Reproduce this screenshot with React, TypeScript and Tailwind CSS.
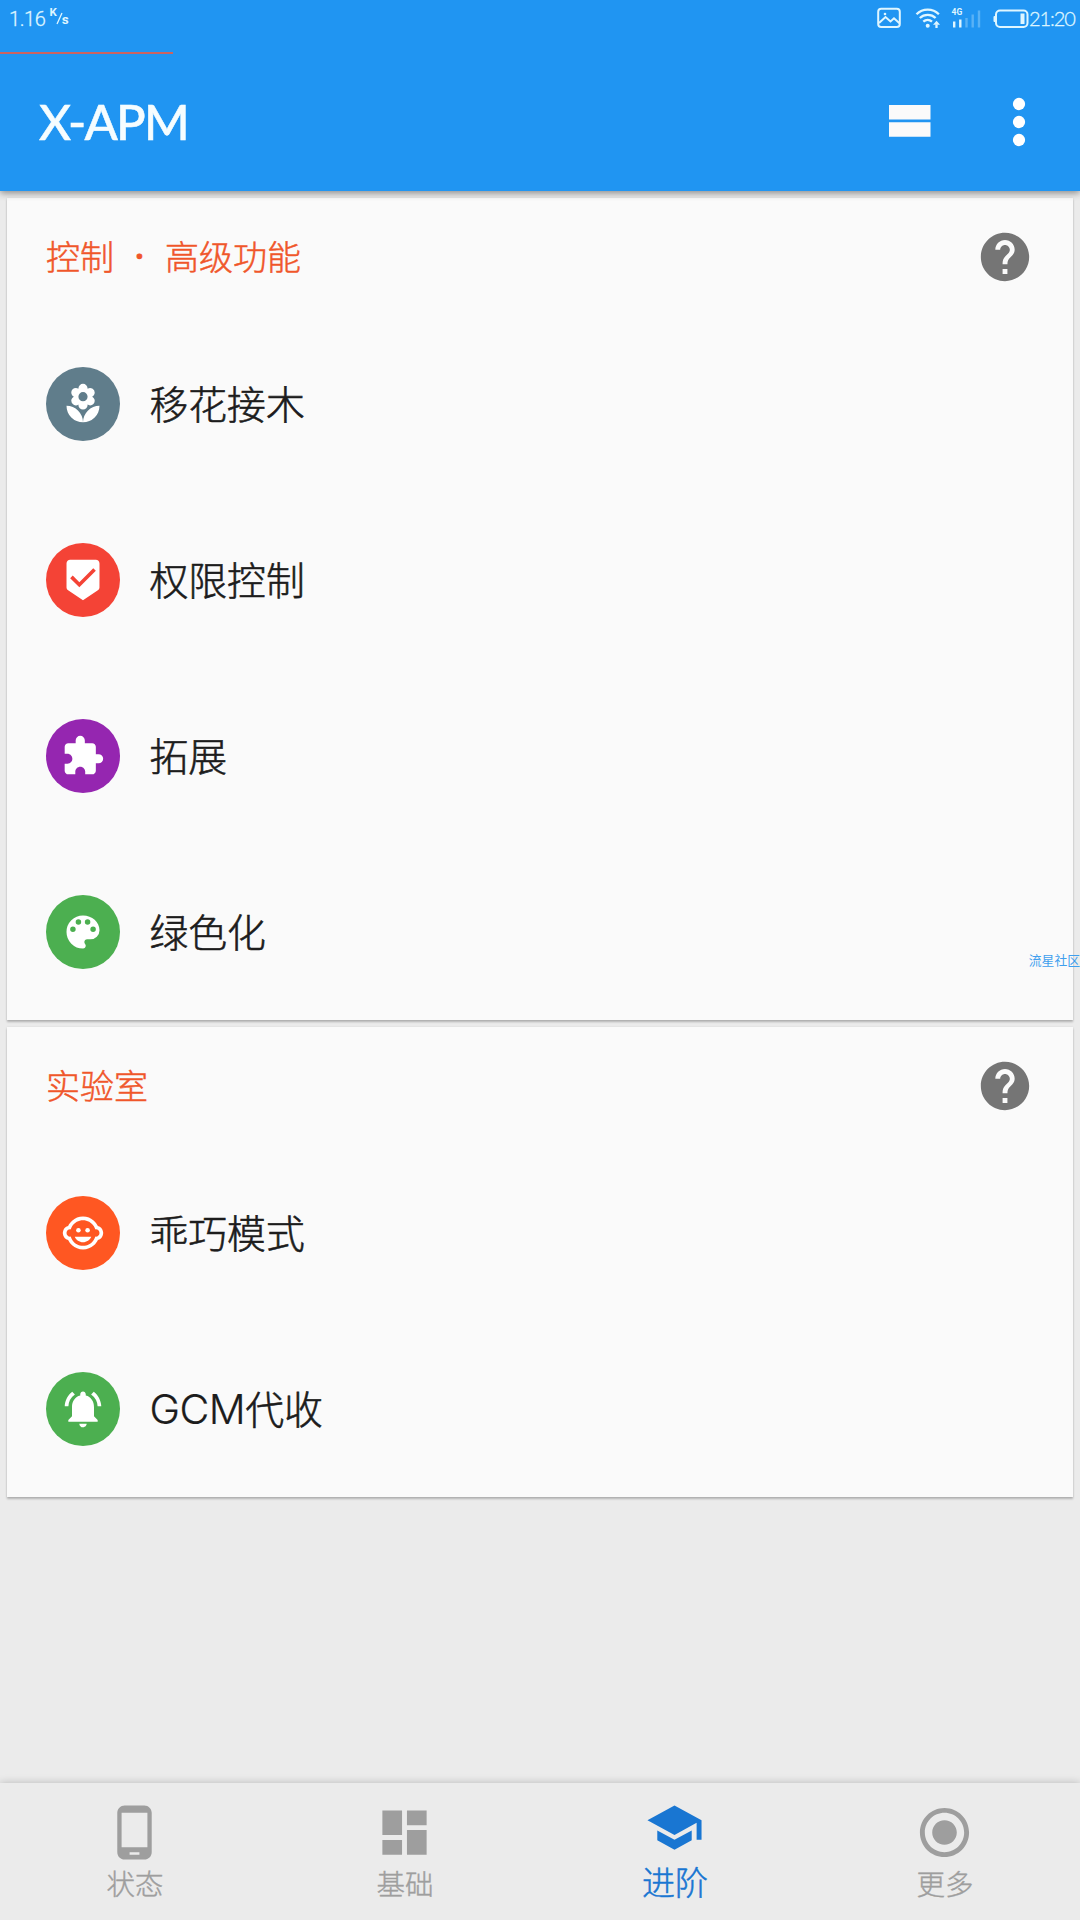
import type { ReactNode } from "react";
import {
  MdBeenhere,
  MdDashboard,
  MdExtension,
  MdHelp,
  MdLocalFlorist,
  MdNotificationsActive,
  MdPhoneAndroid,
  MdRadioButtonChecked,
  MdSchool,
} from "react-icons/md";

const CJK = "font-['Noto_Sans_CJK_SC',sans-serif]";

function PaletteIcon() {
  return (
    <svg viewBox="0 0 24 24" className="size-[44px]" fill="currentColor">
      <path d="M12 3a9 9 0 0 0 0 18c.83 0 1.5-.67 1.5-1.5 0-.39-.15-.74-.39-1.01-.23-.26-.38-.61-.38-.99 0-.83.67-1.5 1.5-1.5H16a5 5 0 0 0 5-5c0-4.42-4.03-8-9-8zm-5.5 9a1.5 1.5 0 1 1 0-3 1.5 1.5 0 0 1 0 3zm3-4a1.5 1.5 0 1 1 0-3 1.5 1.5 0 0 1 0 3zm5 0a1.5 1.5 0 1 1 0-3 1.5 1.5 0 0 1 0 3zm3 4a1.5 1.5 0 1 1 0-3 1.5 1.5 0 0 1 0 3z" />
    </svg>
  );
}

function FaceIcon() {
  return (
    <svg viewBox="0 0 24 24" className="size-[44px]" fill="currentColor">
      <circle cx="14.5" cy="10.5" r="1.25" />
      <circle cx="9.5" cy="10.5" r="1.25" />
      <path d="M22.94 12.66c.04-.21.06-.43.06-.66s-.02-.45-.06-.66a4.008 4.008 0 0 0-2.81-3.17 9.114 9.114 0 0 0-2.19-2.91C16.36 3.85 14.28 3 12 3s-4.36.85-5.94 2.26c-.92.81-1.67 1.8-2.19 2.91a3.994 3.994 0 0 0-2.81 3.17c-.04.21-.06.43-.06.66s.02.45.06.66a4.008 4.008 0 0 0 2.81 3.17 8.977 8.977 0 0 0 2.17 2.89C7.62 20.14 9.71 21 12 21s4.38-.86 5.97-2.28c.9-.8 1.65-1.79 2.17-2.89a3.998 3.998 0 0 0 2.8-3.17zM19 14c-.1 0-.19-.02-.29-.03-.2.67-.49 1.29-.86 1.86C16.6 17.74 14.45 19 12 19s-4.6-1.26-5.85-3.17c-.37-.57-.66-1.19-.86-1.86-.1.01-.19.03-.29.03-1.1 0-2-.9-2-2s.9-2 2-2c.1 0 .19.02.29.03.2-.67.49-1.29.86-1.86C7.4 6.26 9.55 5 12 5s4.6 1.26 5.85 3.17c.37.57.66 1.19.86 1.86.1-.01.19-.03.29-.03 1.1 0 2 .9 2 2s-.9 2-2 2zM7.5 14h9c-.76 1.77-2.49 3-4.5 3s-3.74-1.23-4.5-3z" />
    </svg>
  );
}

function StatusBar() {
  return (
    <div className="flex h-[37px] items-center justify-between pl-[9px] pr-[6px] text-[#dff6ff]">
      <div className="flex items-center font-[Roboto,sans-serif] leading-none">
        <span className="text-[20px] font-light tracking-[-0.4px] [-webkit-text-stroke:0.3px_#dff6ff]">1.16</span>
        <span className="mb-[12px] ml-[4px] text-[11.5px] font-bold">K</span>
        <svg viewBox="0 0 7 14" className="-ml-px h-[14px] w-[7px]" stroke="currentColor" strokeWidth="1.3">
          <path d="M1 12 6 1" />
        </svg>
        <span className="-ml-px mt-[2px] text-[13.5px] font-bold">s</span>
      </div>
      <div className="flex items-center">
        <svg viewBox="0 0 120 28" className="h-[28px] w-[120px]" fill="none" stroke="currentColor">
          <g strokeWidth="2">
            <rect x="1.2" y="3.7" width="21.6" height="18.2" rx="3" />
            <path d="m2 18 6.5-6 5 4.5 3.5-3.2 5.5 5" />
            <circle cx="8" cy="9" r="1.3" fill="currentColor" stroke="none" />
          </g>
          <g strokeWidth="2.3">
            <path d="M39.5 9.3c6.2-6.2 16.2-6.2 22.4 0" />
            <path d="M42.8 13c4.4-4.2 11.5-4.2 15.8 0" />
            <path d="M46.3 16.6c2.5-2.2 6.2-2.2 8.7 0" />
            <circle cx="50.7" cy="20.7" r="2" fill="currentColor" stroke="none" />
            <path d="M59.5 23v-3.5" />
          </g>
          <path d="m56 19.8 3.5-4 3.5 4z" fill="currentColor" stroke="none" />
          <text x="74.5" y="10.2" fontSize="8.5" fontWeight="700" fill="currentColor" stroke="none" fontFamily="Roboto">4G</text>
          <g strokeWidth="2.4">
            <path d="M77.2 16.5v6M83.3 14.5v8" />
            <path d="M89.5 13v9.5M95.7 9.5v13M102 5.5v17" opacity=".3" />
          </g>
        </svg>
        <svg viewBox="0 0 36 20" className="-ml-[4px] h-[20px] w-[36px]" fill="none">
          <rect x="3" y="1.5" width="31.5" height="16.5" rx="4" stroke="currentColor" strokeWidth="2" />
          <rect x=".5" y="7" width="2.5" height="6" rx="1" fill="currentColor" />
          <rect x="27.5" y="4.5" width="4" height="10.5" fill="currentColor" />
        </svg>
        <span className="mb-px w-[45px] whitespace-nowrap font-[Lato,sans-serif] text-[20px] font-light leading-none tracking-[-1.1px] [-webkit-text-stroke:0.3px_#dff6ff]">21:20</span>
      </div>
    </div>
  );
}

function AppBar() {
  return (
    <header className="relative z-10 flex h-[191px] flex-none flex-col bg-[#2095f2] shadow-[0_2px_7px_rgba(0,0,0,0.42)]">
      <StatusBar />
      <div className="mt-[15px] h-[2px] w-[173px] bg-[#cc6360]" />
      <div className="flex flex-1 items-center justify-between pb-[2px] pl-[39px] pr-[25px]">
        <h1 className="font-[Lato,sans-serif] text-[49px] font-medium leading-none tracking-[-1.8px] text-[#f6fdff] [-webkit-text-stroke:0.5px_#f6fdff]">X-APM</h1>
        <div className="flex items-center text-[#fafafa]">
          <svg viewBox="0 0 42 32" className="mb-px mr-[52px] h-[32px] w-[42px]" fill="currentColor">
            <path d="M0 0h41.5v14.6H0zM0 17.2h41.5v14.6H0z" />
          </svg>
          <svg viewBox="0 0 24 24" className="size-[72px]" fill="#fff">
            <circle cx="12" cy="6" r="2.05" />
            <circle cx="12" cy="12" r="2.05" />
            <circle cx="12" cy="18" r="2.05" />
          </svg>
        </div>
      </div>
    </header>
  );
}

function Card({ title, children }: { title: ReactNode; children: ReactNode }) {
  return (
    <section className="bg-[#fafafa] shadow-[0_2px_2px_rgba(0,0,0,0.24),0_0_2px_rgba(0,0,0,0.08)]">
      <div className="flex h-[118px] items-center justify-between pl-[39px] pr-[39px]">
        <h2 className="flex items-center whitespace-pre pb-[2px] text-[34px] font-light leading-none text-[#f0562a] [-webkit-text-stroke:0.5px_#f0562a]">{title}</h2>
        <MdHelp className="size-[58px] text-[#757575]" />
      </div>
      {children}
    </section>
  );
}

function Row({ color, icon, children }: { color: string; icon: ReactNode; children: ReactNode }) {
  return (
    <div className="flex h-[176px] items-center pl-[39px]">
      <div className={"flex size-[74px] items-center justify-center rounded-full text-white " + color}>{icon}</div>
      <div className="ml-[29.5px] flex h-[39px] items-baseline pb-[4px] text-[38.8px] font-light leading-[34px] text-[#1c1c1c] [-webkit-text-stroke:0.6px_#1c1c1c]">{children}</div>
    </div>
  );
}

function Tab({ icon, label, active = false }: { icon: ReactNode; label: string; active?: boolean }) {
  return (
    <div className={"flex flex-1 flex-col items-center " + (active ? "pt-[15px] text-[#1976d2]" : "pt-[20px] text-[#9e9e9e]")}>
      <div className="pr-[2px]">{icon}</div>
      <span
        className={
          active
            ? "mt-[8px] text-[33px] font-light leading-none [-webkit-text-stroke:0.5px_#1976d2]"
            : "mt-[7px] text-[28.5px] font-light leading-none [-webkit-text-stroke:0.4px_#9e9e9e]"
        }
      >
        {label}
      </span>
    </div>
  );
}

export default function App() {
  return (
    <div className={"relative flex h-[1920px] w-[1080px] flex-col overflow-hidden bg-[#ebebeb] " + CJK}>
      <AppBar />
      <main className="flex flex-1 flex-col gap-[7px] px-[7px] pt-[7px]">
        <Card
          title={
            <>
              <span>控制</span>
              <span className="w-[51px] text-center font-['Noto_Sans',sans-serif] font-semibold">·</span>
              <span>高级功能</span>
            </>
          }
        >
          <Row color="bg-[#607d8b]" icon={<MdLocalFlorist className="size-[44px]" />}>移花接木</Row>
          <Row color="bg-[#f44336]" icon={<MdBeenhere className="size-[44px]" />}>权限控制</Row>
          <Row color="bg-[#9526b0]" icon={<MdExtension className="size-[44px]" />}>拓展</Row>
          <Row color="bg-[#4caf50]" icon={<PaletteIcon />}>绿色化</Row>
        </Card>
        <Card title="实验室">
          <Row color="bg-[#ff5722]" icon={<FaceIcon />}>乖巧模式</Row>
          <Row color="bg-[#4caf50]" icon={<MdNotificationsActive className="size-[44px]" />}>
            <span className="font-[Inter,sans-serif] text-[41px] tracking-[-0.5px] [-webkit-text-stroke:0.2px_#1c1c1c]">GCM</span>代收
          </Row>
        </Card>
      </main>
      <nav className="flex h-[137px] flex-none bg-[#ebebeb] shadow-[0_0_8px_rgba(0,0,0,0.22)]">
        <Tab icon={<MdPhoneAndroid className="size-[59px]" />} label="状态" />
        <Tab icon={<MdDashboard className="size-[59px]" />} label="基础" />
        <Tab icon={<MdSchool className="size-[59px]" />} label="进阶" active />
        <Tab icon={<MdRadioButtonChecked className="size-[59px]" />} label="更多" />
      </nav>
      <span className="absolute right-0 top-[952px] whitespace-nowrap text-[12.8px] leading-[16px] text-[#3f9fee]">流星社区</span>
    </div>
  );
}
